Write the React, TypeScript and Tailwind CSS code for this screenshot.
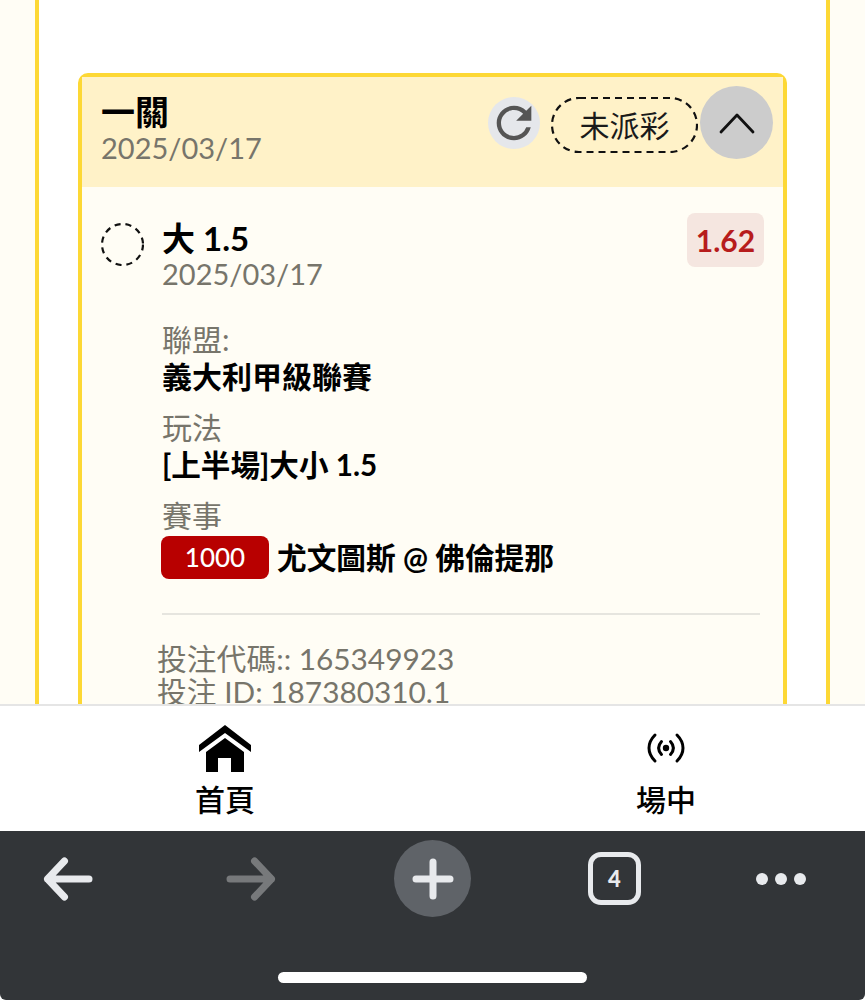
import { MdRefresh } from 'react-icons/md';

const details = [
    { label: '聯盟:', value: '義大利甲級聯賽', size: 'text-[30px]' },
    { label: '玩法', value: '[上半場]大小 1.5', size: 'text-[29.6px]' },
];

const App = () => {
    return (
        <div className="h-[1000px] w-[865px] flex flex-col overflow-hidden bg-white font-['Lato','Noto_Sans_CJK_TC',sans-serif]">
            <main className="h-[704px] shrink-0 overflow-hidden bg-[#fffdf5] px-[35px]">
                <div className="h-full border-x-4 border-[#fdd835] bg-white pt-[73px] px-[39px]">
                    <section className="h-[700px] rounded-[10px] border-4 border-[#fdd835] bg-[#fffdf5]">
                        <header className="h-[110px] bg-[#fff2c8] pl-[19px] pr-[10px] flex items-start">
                            <div className="pt-[16px]">
                                <h2 className="text-[34px] leading-[38px] font-bold text-black">一關</h2>
                                <p className="text-[29px] leading-[34px] text-[#77756b]">2025/03/17</p>
                            </div>
                            <div className="ml-auto flex items-start mt-[9px]">
                                <div className="mt-[11px] w-[52px] h-[52px] rounded-full bg-[#e5e7eb] flex items-center justify-center">
                                    <MdRefresh size={52} className="text-[#555555] shrink-0" />
                                </div>
                                <span className="relative mt-[11px] ml-[11px] w-[147px] h-[56px] text-[30px] leading-none text-[#1a1a1a] flex items-center justify-center">
                                    <svg className="absolute inset-0" width="147" height="56" fill="none">
                                        <rect x="1" y="1" width="145" height="54" rx="27" stroke="#111111" strokeWidth="2.2" strokeDasharray="7 5" />
                                    </svg>
                                    未派彩
                                </span>
                                <button className="ml-[2px] w-[73px] h-[73px] rounded-full bg-[#cccccc] flex items-center justify-center">
                                    <svg width="36" height="24" viewBox="0 0 36 24" fill="none" stroke="#111111" strokeWidth="2.8" strokeLinecap="round" strokeLinejoin="round">
                                        <path d="M2 21 18 4l16 17" />
                                    </svg>
                                </button>
                            </div>
                        </header>
                        <div className="pl-[19px] pr-[19px] pt-[26px]">
                            <div className="flex items-start">
                                <svg width="43" height="43" className="mt-[10px] shrink-0" fill="none">
                                    <circle cx="21.5" cy="21.5" r="20.5" stroke="#111111" strokeWidth="2.2" strokeDasharray="6 5" />
                                </svg>
                                <div className="ml-[18px] pt-[7px]">
                                    <h3 className="text-[33px] leading-[37px] font-bold text-black">大 1.5</h3>
                                    <p className="text-[29px] leading-[34px] text-[#77756b]">2025/03/17</p>
                                </div>
                                <div className="ml-auto w-[77px] h-[54px] rounded-lg bg-[#f5e6e0] flex items-center justify-center text-[30px] font-bold text-[#b71c1c]">
                                    1.62
                                </div>
                            </div>
                            <div className="ml-[61px] mr-[4px] mt-[30px]">
                                {details.map((item) => (
                                    <div key={item.label} className="mb-[14px]">
                                        <p className="text-[30px] leading-[37px] text-[#77756b]">{item.label}</p>
                                        <p className={`${item.size} leading-[37px] font-bold text-black`}>{item.value}</p>
                                    </div>
                                ))}
                                <p className="text-[30px] leading-[37px] text-[#77756b]">賽事</p>
                                <div className="flex items-center mt-[2px] -ml-[1px]">
                                    <span className="w-[108px] h-[43px] rounded-lg bg-[#b80000] text-white text-[26px] font-medium flex items-center justify-center">1000</span>
                                    <span className="ml-[8px] text-[29.7px] leading-[43px] font-bold text-black">尤文圖斯 @ 佛倫提那</span>
                                </div>
                                <div className="mt-[34px] h-[2px] bg-[#e6e5df]"></div>
                                <div className="-ml-[5px] mt-[27px] text-[29.8px] leading-[33px] text-[#77756b]">
                                    <p>投注代碼:: 165349923</p>
                                    <p>投注 ID: 187380310.1</p>
                                </div>
                            </div>
                        </div>
                    </section>
                </div>
            </main>
            <nav className="h-[127px] shrink-0 border-t-2 border-[#e5e5e5] bg-white pl-[195px] pr-[169px] flex justify-between">
                <div className="flex flex-col items-center pt-[18px]">
                    <svg width="54" height="50" viewBox="0 0 54 50" fill="#000000">
                        <path d="M27 1 53 21v7L27 9 1 28v-7z" />
                        <path d="M27 14 46 28v20H33V34H20v14H8V28z" />
                    </svg>
                    <span className="text-[30px] leading-[36px] font-medium text-black mt-[7px]">首頁</span>
                </div>
                <div className="flex flex-col items-center pt-[24px]">
                    <svg width="44" height="36" viewBox="0 0 44 36" fill="none" stroke="#000000" strokeWidth="3" strokeLinecap="round">
                        <path d="M11 5C3 13 3 23 11 31M33 5c8 8 8 18 0 26M17.500 11.500c-4 4.500-4 8.500 0 13M26.500 11.500c4 4.500 4 8.500 0 13" />
                        <circle cx="22" cy="18" r="3.200" fill="#000000" stroke="none" />
                    </svg>
                    <span className="text-[30px] leading-[36px] font-medium text-black mt-[15px]">場中</span>
                </div>
            </nav>
            <footer className="h-[169px] shrink-0 rounded-b-[6px] bg-[#323538] flex flex-col items-center">
                <div className="w-full flex items-center pl-[43px] pt-[9px]">
                    <svg width="50" height="44" viewBox="0 0 50 44" fill="none" stroke="#e8eaed" strokeWidth="7" strokeLinecap="round" strokeLinejoin="round">
                        <path d="M46 22H4.500M21.500 4 4.500 22l17 18" />
                    </svg>
                    <svg width="50" height="44" viewBox="0 0 50 44" fill="none" stroke="#77797b" strokeWidth="7" strokeLinecap="round" strokeLinejoin="round" className="ml-[133px]">
                        <path d="M4 22h41.500M28.500 4l17 18-17 18" />
                    </svg>
                    <div className="ml-[118px] w-[77px] h-[77px] rounded-full bg-[#5f6368] flex items-center justify-center">
                        <svg width="42" height="42" viewBox="0 0 42 42" fill="none" stroke="#e8eaed" strokeWidth="7" strokeLinecap="round">
                            <path d="M21 4v34M4 21h34" />
                        </svg>
                    </div>
                    <div className="ml-[117px] w-[53px] h-[53px] rounded-[13px] border-[5px] border-[#e8eaed] flex items-center justify-center text-[22px] font-black text-[#e8eaed]">
                        4
                    </div>
                    <div className="ml-[115px] flex gap-[7px]">
                        <span className="w-[12px] h-[12px] rounded-full bg-[#e8eaed]"></span>
                        <span className="w-[12px] h-[12px] rounded-full bg-[#e8eaed]"></span>
                        <span className="w-[12px] h-[12px] rounded-full bg-[#e8eaed]"></span>
                    </div>
                </div>
                <div className="mt-[55px] w-[309px] h-[11px] rounded-full bg-white"></div>
            </footer>
        </div>
    );
};

export default App;
